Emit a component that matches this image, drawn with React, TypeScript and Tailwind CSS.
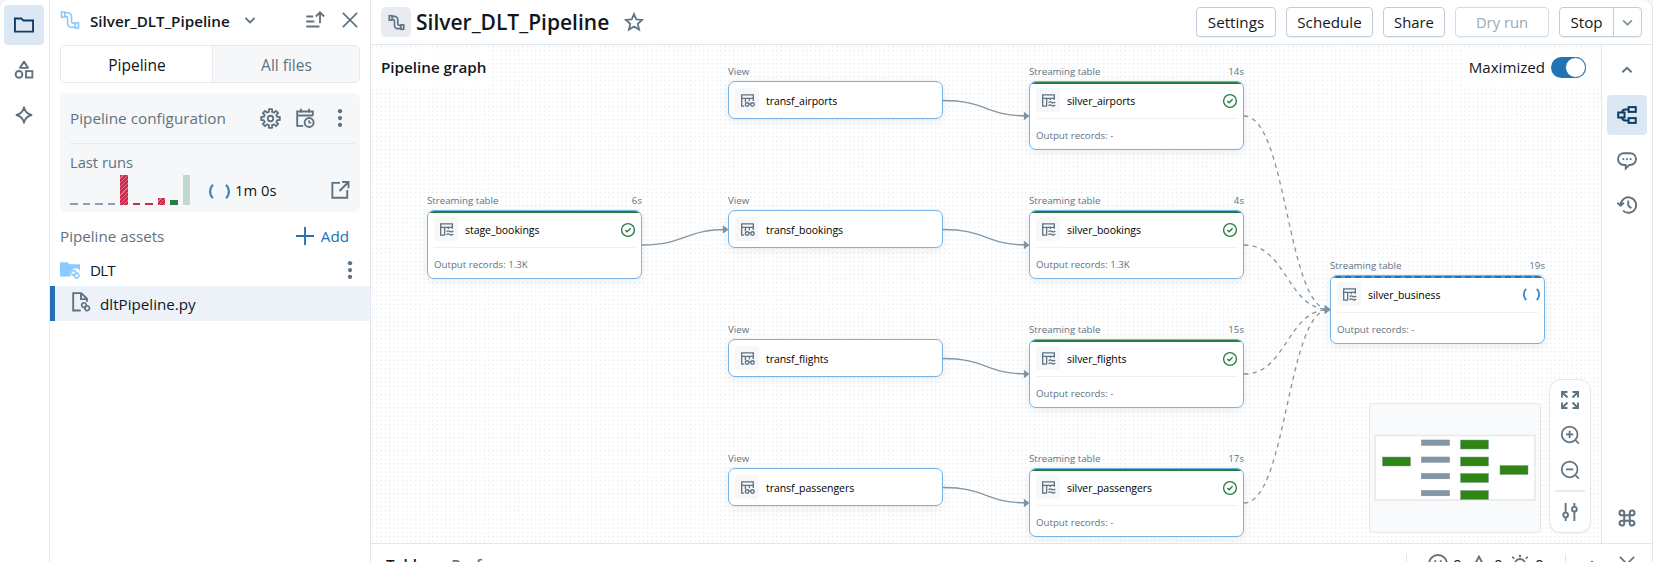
import type { ReactNode } from "react";

type IconProps = { size?: number; className?: string; children?: ReactNode; sw?: number };

function Svg({ size = 20, className = "", children, sw = 1.5 }: IconProps) {
  return (
    <svg width={size} height={size} viewBox="0 0 16 16" fill="none" stroke="currentColor" strokeWidth={sw} className={`shrink-0 ${className}`}>
      {children}
    </svg>
  );
}

const FolderIcon = () => (
  <Svg size={20}>
    <path d="M.75 2.75h5.1l1.6 1.6h7.8v8.9H.75z" />
  </Svg>
);

const ShapesIcon = () => (
  <Svg size={20}>
    <path d="M8 1.3 11.2 6.3H4.8z" strokeLinejoin="round" />
    <circle cx="4" cy="11.500" r="2.7" />
    <rect x="9.6" y="8.900" width="5.1" height="5.1" />
  </Svg>
);

const SparkleIcon = () => (
  <Svg size={20}>
    <path d="M8 1.8c.8 3.7 2.3 5.2 6 6.2-3.7 1-5.2 2.500-6 6.200C7.200 10.500 5.700 9 2 8c3.700-1 5.200-2.500 6-6.200z" strokeLinejoin="round" />
  </Svg>
);

const PipeIcon = ({ size = 20, className = "", sw = 1.3 }: IconProps) => (
  <Svg size={size} className={className} sw={sw}>
    <rect x="1.2" y="1.6" width="2.6" height="4.2" />
    <rect x="12.2" y="10.200" width="2.6" height="4.2" />
    <path d="M3.800 2.200H6a3.200 3.200 0 0 1 3.200 3.200v3.400c0 1.100.7 2 2 2h1M3.800 5.200h1.100c.8 0 1.200.6 1.200 1.300v4.300a3 3 0 0 0 3 3h3.100" />
  </Svg>
);

const ChevronDown = ({ size = 20, className = "" }: IconProps) => (
  <Svg size={size} className={className}>
    <path d="m4.300 6.300 3.700 3.600 3.700-3.600" />
  </Svg>
);

const ChevronUp = () => (
  <Svg size={20}>
    <path d="m4.300 9.800 3.700-3.600 3.700 3.600" />
  </Svg>
);

const SortIcon = () => (
  <Svg size={20}>
    <path d="M1 5.200h5.500M1 9.200h6.500M1 13.200h10.500M12 10.500V2M8.700 5.200 12 1.900l3.300 3.300" />
  </Svg>
);

const CloseIcon = () => (
  <Svg size={20} sw={1.300}>
    <path d="m2.300 2.300 11.400 11.400M13.700 2.300 2.300 13.700" />
  </Svg>
);

const gearPath = (() => {
  const pts: string[] = [];
  for (let i = 0; i < 8; i++) {
    const a = (i * Math.PI) / 4 - Math.PI / 2;
    const corners: [number, number][] = [[-0.24, 5.2], [-0.17, 7.200], [0.17, 7.200], [0.24, 5.2]];
    for (const [da, r] of corners) pts.push(`${(8 + r * Math.cos(a + da)).toFixed(2)} ${(8 + r * Math.sin(a + da)).toFixed(2)}`);
  }
  return `M${pts.join("L")}Z`;
})();

const GearIcon = () => (
  <Svg size={21} sw={1.400}>
    <path d={gearPath} strokeLinejoin="round" />
    <circle cx="8" cy="8" r="2.100" />
  </Svg>
);

const CalendarClockIcon = () => (
  <Svg size={20}>
    <path d="M6.500 14.250H1.750V2.750h12.500v3.500M1.750 6h12.500M4.750.6v3.200M11.250.6v3.200" />
    <circle cx="11.300" cy="11.600" r="3.600" />
    <path d="M11.300 9.700v2.100h1.700" strokeWidth="1.200" />
  </Svg>
);

const Kebab = () => (
  <Svg size={20}>
    <g fill="currentColor" stroke="none">
      <circle cx="8" cy="2.500" r="1.700" />
      <circle cx="8" cy="8" r="1.700" />
      <circle cx="8" cy="13.500" r="1.700" />
    </g>
  </Svg>
);

const SpinnerIcon = ({ size = 20 }: IconProps) => (
  <Svg size={size} className="text-[#3f87c4]" sw={1.700}>
    <path d="M3 2.800a7.300 7.300 0 0 0 0 10.400M13 2.800a7.300 7.300 0 0 1 0 10.400" />
  </Svg>
);

const OpenIcon = () => (
  <Svg size={20}>
    <path d="M8 2.300H1.900v11.900h11.900V8M9.800 1.600h5v5M14.600 1.800 7.600 8.800" />
  </Svg>
);

const PlusIcon = () => (
  <Svg size={20}>
    <path d="M8 .8v14.400M.8 8h14.400" />
  </Svg>
);

const FolderLinkIcon = () => (
  <Svg size={20} className="text-[#8acaff]">
    <path d="M0 1.800h6l1.400 1.500H16v5.400a4 4 0 0 0-6.500-.7c-1.700 1-1.800 3.300-.8 5.100H0z" fill="currentColor" stroke="none" />
    <rect x="9" y="8.500" width="3.700" height="3.500" rx="1.600" strokeWidth="1.300" transform="rotate(-25 10.800 10.200)" />
    <rect x="11.400" y="10.700" width="3.700" height="3.500" rx="1.600" strokeWidth="1.300" transform="rotate(-25 13.200 12.400)" />
  </Svg>
);

const FileLinkIcon = () => (
  <Svg size={20}>
    <path d="M7.800 14.800H1.750V.9h6.500l4.500 4.500v2.300M8 .9v4.800h4.800" />
    <rect x="8.600" y="8.700" width="3.600" height="3.700" rx="1.700" strokeWidth="1.300" transform="rotate(-20 10.400 10.500)" />
    <rect x="11.100" y="11.100" width="3.600" height="3.700" rx="1.700" strokeWidth="1.300" transform="rotate(-20 12.900 13)" />
  </Svg>
);

const StarIcon = () => (
  <Svg size={20} sw={1.400}>
    <path d="m8 1.600 1.850 4.350 4.750.4-3.600 3.100 1.100 4.600L8 11.600l-4.100 2.450 1.100-4.600-3.600-3.100 4.750-.4z" />
  </Svg>
);

const TableIcon = ({ streaming }: { streaming: boolean }) => (
  <Svg size={15} sw={1.400}>
    {streaming ? (
      <>
        <path d="M6.200 14H1.800V2h12.400v5.300M1.800 5.800h12.400M6 5.800V14M10 5.800v1.700" />
        <path d="M8 10.300c1.200-1.300 2.300-1 3.400-.3s2.300 1 3.800-.4M8 13.600c1.200-1.300 2.300-1 3.400-.3s2.300 1 3.800-.4" />
      </>
    ) : (
      <>
        <path d="M4.500 14H1.800V2h12.400v6.500M1.800 5.800h12.400M5.800 5.800v4M10 5.800v3" />
        <circle cx="7.600" cy="12.300" r="1.900" />
        <circle cx="13.300" cy="12.300" r="1.900" />
        <path d="M9.300 11.500h2.300" />
      </>
    )}
  </Svg>
);

const CheckCircle = () => (
  <Svg size={16} sw={1.350} className="text-[#277c43]">
    <circle cx="8" cy="8" r="6.400" />
    <path d="m5.300 8.100 1.800 1.700 3.500-3.500" />
  </Svg>
);

const GraphIcon = () => (
  <Svg size={20} sw={1.600}>
    <rect x="1" y="6" width="5" height="4" />
    <rect x="9.300" y="1.700" width="5.700" height="3.800" />
    <rect x="9.300" y="10.500" width="5.700" height="3.800" />
    <path d="M9.300 3.600H6.700A2.700 2.700 0 0 0 4 6M9.300 12.400H6.700A2.700 2.700 0 0 1 4 10" />
  </Svg>
);

const ChatIcon = () => (
  <Svg size={20}>
    <path d="M5.500 1.750h5a4.700 4.700 0 0 1 0 9.400h-.6L7 14v-2.850H5.500a4.700 4.700 0 0 1 0-9.400z" />
    <path d="M4.400 6.500h1.400M7.300 6.500h1.400M10.200 6.500h1.400" strokeWidth="1.400" />
  </Svg>
);

const HistoryIcon = () => (
  <Svg size={20}>
    <path d="M2.900 8a6.200 6.200 0 1 1 1.900 4.500M.3 6.200l2.600 2.400L5.500 6.200M9 4.400v4l2.400 2.200" />
  </Svg>
);

const CommandIcon = () => (
  <Svg size={20} sw={1.600}>
    <path d="M5.800 5.800V3.900a1.900 1.900 0 1 0-1.900 1.900zM10.200 5.800V3.900a1.900 1.900 0 1 1 1.900 1.900zM5.800 10.200v1.900a1.900 1.900 0 1 1-1.900-1.900zM10.200 10.200v1.900a1.900 1.900 0 1 0 1.900-1.900zM5.800 5.800h4.400v4.400H5.800z" />
  </Svg>
);

const ExpandIcon = () => (
  <Svg size={20}>
    <path d="M1.600 6V1.600H6M1.800 1.800 6 6M10 1.600h4.400V6M14.200 1.800 10 6M1.600 10v4.400H6M1.800 14.200 6 10M10 14.400h4.400V10M14.200 14.200 10 10" />
  </Svg>
);

const ZoomIcon = ({ plus }: { plus: boolean }) => (
  <Svg size={20} sw={1.400}>
    <circle cx="7.700" cy="7.500" r="6.300" />
    <path d="m12.200 12 2.900 2.900M4.800 7.500h5.800" />
    {plus && <path d="M7.700 4.600v5.800" />}
  </Svg>
);

const SlidersIcon = () => (
  <Svg size={20}>
    <path d="M4.500.8v7.700M4.500 12.300v2.900M11.500.8v3M11.500 7.700v7.500" />
    <circle cx="4.500" cy="10.400" r="1.900" />
    <circle cx="11.500" cy="5.800" r="1.900" />
  </Svg>
);

type FlowNode = { name: string; x: number; y: number; time?: string; records?: string; running?: boolean };

const nodes: FlowNode[] = [
  { name: "stage_bookings", x: 427, y: 210, time: "6s", records: "1.3K" },
  { name: "transf_airports", x: 728, y: 81 },
  { name: "transf_bookings", x: 728, y: 210 },
  { name: "transf_flights", x: 728, y: 339 },
  { name: "transf_passengers", x: 728, y: 468 },
  { name: "silver_airports", x: 1029, y: 81, time: "14s", records: "-" },
  { name: "silver_bookings", x: 1029, y: 210, time: "4s", records: "1.3K" },
  { name: "silver_flights", x: 1029, y: 339, time: "15s", records: "-" },
  { name: "silver_passengers", x: 1029, y: 468, time: "17s", records: "-" },
  { name: "silver_business", x: 1330, y: 275, time: "19s", records: "-", running: true },
];

const CANVAS_X = 371;
const CANVAS_Y = 45;

const edges = [
  { x: 642, y1: 245, y2: 229.500, dashed: false },
  ...[0, 1, 2, 3].map((i) => ({ x: 943, y1: 100.500 + i * 129, y2: 116 + i * 129, dashed: false })),
  ...[0, 1, 2, 3].map((i) => ({ x: 1244, y1: 116 + i * 129, y2: 309.500, dashed: true })),
];

function Node({ n }: { n: FlowNode }) {
  const streaming = n.records !== undefined;
  return (
    <div className="absolute w-[215px]" style={{ left: n.x - CANVAS_X, top: n.y - 17 - CANVAS_Y }}>
      <div className="flex h-[17px] justify-between text-[9.700px] leading-[15px] text-[#5f7281]">
        <span>{streaming ? "Streaming table" : "View"}</span>
        <span>{n.time}</span>
      </div>
      <div className="relative overflow-hidden rounded-[7px] border border-[#77b2e5] bg-white shadow-[0_2px_8px_rgba(30,60,90,0.1)]">
        {streaming && !n.running && <div className="absolute inset-x-0 top-0 h-[2px] bg-[#277c43]" />}
        {n.running && (
          <div className="absolute inset-x-0 top-0 h-[2px] bg-[repeating-linear-gradient(90deg,#4299e0_0,#4299e0_4px,#2272b4_4px,#2272b4_10px)]" />
        )}
        <div className="flex h-[36px] items-center pr-[5px] pl-[6px]">
          <div className="flex size-6 items-center justify-center rounded-[3px] bg-[#f6f7f9] text-[#5f7281]">
            <TableIcon streaming={streaming} />
          </div>
          <span className="ml-[7px] flex-1 pt-px text-[10.500px] leading-4 tracking-[-0.050px] text-[#000]">{n.name}</span>
          {n.running ? (
            <div className="-mr-px flex">
              <SpinnerIcon size={17} />
            </div>
          ) : (
            streaming && (
              <div className="flex pt-px">
                <CheckCircle />
              </div>
            )
          )}
        </div>
        {streaming && (
          <div className="mx-[6px] h-[31px] border-t border-[#eef0f2] pt-[9px] text-[9.700px] leading-[15px] text-[#5f7281]">
            Output records: {n.records}
          </div>
        )}
      </div>
    </div>
  );
}

const HATCH = "bg-[repeating-linear-gradient(135deg,#c82d4c_0,#c82d4c_2px,#dd7288_2px,#dd7288_3px)]";
const runs = [
  "h-[2px] bg-[#8fa1b0]",
  "h-[2px] bg-[#8fa1b0]",
  "h-[2px] bg-[#8fa1b0]",
  "h-[2px] bg-[#8fa1b0]",
  `h-[30px] ${HATCH}`,
  "h-[2px] bg-[#c82d4c]",
  "h-[2px] bg-[#c82d4c]",
  `h-[7px] ${HATCH}`,
  "h-[5px] bg-[#277c43]",
  "h-[30px] bg-[#c2d8cc]",
];

function Button({ children, className }: { children: ReactNode; className: string }) {
  return (
    <div className={`flex h-[30px] items-center justify-center rounded-[4px] border pt-px shadow-[0_1px_1px_rgba(0,0,0,0.05)] ${className}`}>{children}</div>
  );
}

function LeftRail() {
  return (
    <div className="flex w-[50px] shrink-0 flex-col gap-[5px] border-r border-[#e6eaee] pt-[5px] pl-1 text-[#5f7281]">
      <div className="flex size-10 items-center justify-center rounded-[4px] bg-[#dbe7f3] text-[#0e3b63]">
        <FolderIcon />
      </div>
      <div className="flex size-10 items-center justify-center">
        <ShapesIcon />
      </div>
      <div className="flex size-10 items-center justify-center">
        <SparkleIcon />
      </div>
    </div>
  );
}

function Sidebar() {
  return (
    <div className="flex w-[321px] shrink-0 flex-col border-r border-[#e1e6ea] text-[#5f7281]">
      <div className="flex h-[45px] items-center pr-[10px] pb-[5px] pl-[10px]">
        <PipeIcon className="text-[#8acaff]" />
        <span className="ml-[10px] pt-[2px] font-semibold text-[#11171c]">Silver_DLT_Pipeline</span>
        <ChevronDown className="ml-[10px]" />
        <div className="flex-1" />
        <SortIcon />
        <div className="ml-[15px] flex">
          <CloseIcon />
        </div>
      </div>
      <div className="mx-[10px] flex h-[38px] shrink-0 rounded-[5px] border border-[#e6eaee] bg-[#f6f7f9] text-[15.500px]">
        <div className="flex w-[152px] items-center justify-center rounded-[4px] border-r border-[#e6eaee] bg-white pt-[3px] pl-px text-[#11171c]">Pipeline</div>
        <div className="flex flex-1 items-center justify-center pt-[3px] pl-px">All files</div>
      </div>
      <div className="mx-[10px] mt-[10px] flex h-[119px] shrink-0 flex-col rounded-[6px] bg-[#f6f7f9] pr-[5px] pl-[10px]">
        <div className="flex h-[51px] items-center border-b border-[#e6eaed] pr-[5px]">
          <span className="flex-1 text-[15.300px]">Pipeline configuration</span>
          <GearIcon />
          <div className="ml-[14px] flex">
            <CalendarClockIcon />
          </div>
          <div className="ml-[15px] flex">
            <Kebab />
          </div>
        </div>
        <div className="mt-[8px] text-[14.700px] leading-5">Last runs</div>
        <div className="mt-[3px] flex h-[30px] items-end pr-[5px]">
          <div className="flex items-end gap-[5px]">
            {runs.map((r, i) => (
              <div key={i} className={`w-[7.500px] ${r}`} />
            ))}
          </div>
          <div className="mb-[3px] ml-[19px] flex flex-1 items-center">
            <SpinnerIcon size={21} />
            <span className="mb-[2px] ml-[5px] text-[14.800px] leading-5 text-[#11171c]">1m 0s</span>
          </div>
          <div className="mb-[5px] flex">
            <OpenIcon />
          </div>
        </div>
      </div>
      <div className="mt-[7px] flex h-[35px] items-center pr-[21px] pl-[10px]">
        <span className="flex-1">Pipeline assets</span>
        <span className="flex items-center gap-[6px] text-[#2272b4]">
          <PlusIcon />
          <span>Add</span>
        </span>
      </div>
      <div className="flex h-[32px] items-center pr-[10px] pb-px pl-[10px]">
        <FolderLinkIcon />
        <span className="ml-[10px] flex-1 pt-[2px] tracking-[-0.800px] text-[#11171c]">DLT</span>
        <Kebab />
      </div>
      <div className="flex h-[35px] items-center border-l-[5px] border-[#2272b4] bg-[#edf2f9] pl-[16px]">
        <div className="mb-[3px] flex">
          <FileLinkIcon />
        </div>
        <span className="ml-[9px] pt-[2px] text-[#11171c]">dltPipeline.py</span>
      </div>
    </div>
  );
}

function Header() {
  return (
    <div className="flex h-[45px] shrink-0 items-center border-b border-[#e1e6ea] pr-[10px] pl-[10px]">
      <div className="flex size-[30px] items-center justify-center rounded-[5px] bg-[#e8ecf0] text-[#5f7281]">
        <PipeIcon size={17} sw={1.500} />
      </div>
      <span className="ml-[5px] pt-[2px] text-[21px] font-semibold text-[#11171c]">Silver_DLT_Pipeline</span>
      <div className="mb-px ml-[15px] flex text-[#5f7281]">
        <StarIcon />
      </div>
      <div className="flex-1" />
      <div className="flex gap-[10px] text-[#11171c]">
        <Button className="w-[80px] border-[#c0cdd8]">Settings</Button>
        <Button className="w-[87px] border-[#c0cdd8]">Schedule</Button>
        <Button className="w-[62px] border-[#c0cdd8] text-[14.800px]">Share</Button>
        <Button className="w-[94px] border-[#d3dde5] text-[14.800px] text-[#9aa8b4]">Dry run</Button>
        <div className="flex h-[30px] rounded-[4px] border border-[#c0cdd8] shadow-[0_1px_1px_rgba(0,0,0,0.05)]">
          <div className="flex w-[54px] items-center justify-center border-r border-[#c0cdd8] pt-px">Stop</div>
          <div className="flex w-[27px] items-center justify-center text-[#8396a5]">
            <ChevronDown size={19} />
          </div>
        </div>
      </div>
    </div>
  );
}

const miniNodes = [
  { x: 1382.5, y: 457, green: true },
  ...[440, 457, 473.5, 490.5].map((y) => ({ x: 1421.5, y, green: false })),
  ...[440, 457, 473.5, 490.5].map((y) => ({ x: 1460.500, y, green: true })),
  { x: 1500, y: 465.500, green: true },
];

function MiniMap() {
  return (
    <svg width="172" height="130" viewBox="1369 403 172 130" className="absolute top-[358px] left-[998px]">
      <rect x="1369.5" y="403.5" width="171" height="129" rx="4" fill="#f9fafc" stroke="#e3e7ec" />
      <rect x="1375" y="435.500" width="160" height="64.500" fill="#fff" stroke="#e6e8ec" strokeWidth="1.500" />
      {miniNodes.map((m, i) => (
        <rect key={i} x={m.x} y={m.y} width="28" height={m.green ? 9 : 5.300} fill={m.green ? "#2e8512" : "#8396a5"} stroke={m.green ? "#8396a5" : "#74889a"} strokeWidth="0.500" />
      ))}
    </svg>
  );
}

function Canvas() {
  return (
    <div className="relative min-w-0 flex-1 overflow-hidden bg-white">
      <svg className="absolute inset-0 h-full w-full">
        <defs>
          <pattern id="dots" width="4.300" height="4.300" patternUnits="userSpaceOnUse">
            <circle cx="1.500" cy="1.500" r="0.700" fill="#dde3e9" />
          </pattern>
        </defs>
        <rect width="100%" height="100%" fill="url(#dots)" />
        <g transform={`translate(${-CANVAS_X} ${-CANVAS_Y})`} fill="none" stroke="#8396a5" strokeWidth="1.300">
          {edges.map((e, i) => (
            <g key={i}>
              <path d={`M${e.x} ${e.y1}C${e.x + 43} ${e.y1} ${e.x + 43} ${e.y2} ${e.x + 85} ${e.y2}`} strokeDasharray={e.dashed ? "4.300 4.300" : undefined} />
              <path d={`M${e.x + 81.500} ${e.y2 - 3}L${e.x + 85.500} ${e.y2}L${e.x + 81.500} ${e.y2 + 3}Z`} fill="#8396a5" />
            </g>
          ))}
        </g>
      </svg>
      {nodes.map((n) => (
        <Node key={n.name} n={n} />
      ))}
      <div className="absolute top-[5px] left-0 flex h-[38px] items-center bg-white/75 pr-[6px] pb-[3px] pl-[10px] font-semibold text-[#11171c]">Pipeline graph</div>
      <div className="absolute top-[5px] right-0 flex h-[38px] items-center gap-[6px] bg-white/75 pr-[15px] pb-[3px] pl-[6px] text-[15.100px] text-[#11171c]">
        Maximized
        <span className="flex h-[21px] w-[35px] justify-end rounded-full bg-[#2272b4]">
          <span className="size-[21px] rounded-full border border-[#2272b4] bg-white" />
        </span>
      </div>
      <MiniMap />
      <div className="absolute right-[10px] bottom-[10px] flex h-[154px] w-[42px] flex-col items-center rounded-[12px] border border-[#e3e7ec] bg-white pt-[10px] text-[#5f7281] shadow-[0_1px_2px_rgba(0,0,0,0.06)]">
        <ExpandIcon />
        <div className="mt-[15px] flex">
          <ZoomIcon plus />
        </div>
        <div className="mt-[15px] flex">
          <ZoomIcon plus={false} />
        </div>
        <div className="mt-[10px] h-[2px] w-[30px] shrink-0 bg-[#e6eaee]" />
        <div className="mt-[10px] flex">
          <SlidersIcon />
        </div>
      </div>
    </div>
  );
}

function RightRail() {
  return (
    <div className="flex w-[51px] shrink-0 flex-col items-center border-l border-[#e1e6ea] pt-[5px] text-[#5f7281]">
      <div className="flex size-10 items-center justify-center">
        <ChevronUp />
      </div>
      <div className="mt-[5px] flex size-10 items-center justify-center rounded-[4px] bg-[#dbe7f3] text-[#0e3b63]">
        <GraphIcon />
      </div>
      <div className="mt-[5px] flex size-10 items-center justify-center pt-px">
        <ChatIcon />
      </div>
      <div className="mt-[5px] flex size-10 items-center justify-center">
        <HistoryIcon />
      </div>
      <div className="mt-auto mb-[15px] flex">
        <CommandIcon />
      </div>
    </div>
  );
}

function BottomPanel() {
  return (
    <div className="h-[19px] shrink-0 overflow-hidden border-t border-[#e1e6ea]">
      <div className="flex h-[40px] items-center pr-[15px] pl-[15px] text-[#5f7281]">
        <span className="font-semibold text-[#11171c]">Tables</span>
        <span className="ml-[18px] font-semibold">Performance</span>
        <div className="flex-1" />
        <div className="h-5 w-px bg-[#e1e6ea]" />
        <div className="ml-[21px] flex items-center text-[#11171c]">
          <Svg size={20} className="text-[#5f7281]">
            <circle cx="8" cy="8" r="7.200" />
            <path d="M5.800 5v2.500M10.200 5v2.500M4.800 11.500a4 4 0 0 1 6.400 0" />
          </Svg>
          <span className="ml-[5px] w-[9px]">0</span>
          <Svg size={20} className="ml-[7px] text-[#5f7281]">
            <path d="M8 2.200 14.500 14h-13z" />
          </Svg>
          <span className="ml-[5px] w-[9px]">0</span>
          <Svg size={20} className="ml-[7px] text-[#5f7281]">
            <circle cx="8" cy="8" r="4" />
            <path d="M8 .5v2M1.800 2.300l1.600 1.400M14.200 2.300l-1.600 1.400M.500 7.500h2M15.500 7.500h-2" />
          </Svg>
          <span className="ml-[5px] w-[9px]">0</span>
        </div>
        <div className="ml-[21px] h-5 w-px bg-[#e1e6ea]" />
        <div className="ml-[16px] flex">
          <ChevronUp />
        </div>
        <div className="ml-[15px] flex">
          <CloseIcon />
        </div>
      </div>
    </div>
  );
}

export default function App() {
  return (
    <div className="h-[562px] w-[1653px] overflow-hidden bg-[#f3f5f7] font-['Open_Sans','Noto_Sans',sans-serif] text-[15.200px]">
      <div className="flex h-full overflow-hidden rounded-t-[9px] border-r border-[#e1e6ea] bg-white">
        <LeftRail />
        <Sidebar />
        <div className="flex min-w-0 flex-1 flex-col">
          <Header />
          <div className="flex min-h-0 flex-1">
            <Canvas />
            <RightRail />
          </div>
          <BottomPanel />
        </div>
      </div>
    </div>
  );
}
